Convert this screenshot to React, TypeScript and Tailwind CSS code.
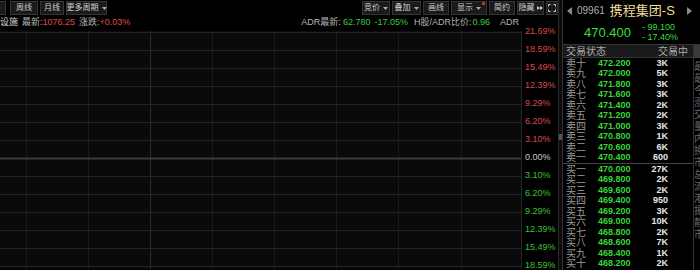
import React from 'react'

const NUM = "font-['Liberation_Sans','Noto_Sans_CJK_SC',sans-serif]"

const sells = [
  ['卖十', '472.200', '3K'],
  ['卖九', '472.000', '5K'],
  ['卖八', '471.800', '3K'],
  ['卖七', '471.600', '3K'],
  ['卖六', '471.400', '2K'],
  ['卖五', '471.200', '2K'],
  ['卖四', '471.000', '3K'],
  ['卖三', '470.800', '1K'],
  ['卖二', '470.600', '6K'],
  ['卖一', '470.400', '600'],
]

const buys = [
  ['买一', '470.000', '27K'],
  ['买二', '469.800', '2K'],
  ['买三', '469.600', '2K'],
  ['买四', '469.400', '950'],
  ['买五', '469.200', '3K'],
  ['买六', '469.000', '10K'],
  ['买七', '468.800', '2K'],
  ['买八', '468.600', '7K'],
  ['买九', '468.400', '1K'],
  ['买十', '468.200', '2K'],
]

const axis = [
  ['21.69%', 'r'], ['18.59%', 'r'], ['15.49%', 'r'], ['12.39%', 'r'], ['9.29%', 'r'], ['6.20%', 'r'], ['3.10%', 'r'],
  ['0.00%', 'z'],
  ['3.10%', 'g'], ['6.20%', 'g'], ['9.29%', 'g'], ['12.39%', 'g'], ['15.49%', 'g'], ['18.59%', 'g'],
]

function Btn({ children, w }: { children: React.ReactNode; w: string }) {
  return (
    <div className={`${w} flex h-[14px] shrink-0 items-center justify-center overflow-visible whitespace-nowrap border border-[#343434] bg-[#1a1a1a] text-[8px] leading-none text-[#cfcfcf]`}>
      {children}
    </div>
  )
}

function Caret() {
  return (
    <svg width="5" height="3" viewBox="0 0 5 3" className="ml-[3px] shrink-0">
      <path d="M0 0H5L2.5 3Z" fill="#aaa" />
    </svg>
  )
}

function Toolbar() {
  return (
    <div className="flex h-[16px] items-start pt-[1px]">
      <div className="h-[14px] w-[6px] border border-l-0 border-[#343434] bg-[#1a1a1a]" />
      <div className="ml-[4px] flex gap-[2px]">
        <Btn w="w-[28px]">周线</Btn>
        <Btn w="w-[24px]">月线</Btn>
        <Btn w="w-[41px]">更多周期<Caret /></Btn>
      </div>
      <div className="flex-1" />
      <div className="flex gap-[2px]">
        <Btn w="w-[28px]">竞价<Caret /></Btn>
        <Btn w="w-[29px]">叠加<Caret /></Btn>
        <Btn w="w-[26px]">画线</Btn>
        <Btn w="w-[36px]">
          <span className="relative flex items-center">
            显示<Caret />
            <span className="absolute right-[-4px] top-[-2px] h-[3px] w-[3px] rounded-full bg-[#ff3030]" />
          </span>
        </Btn>
        <Btn w="w-[26px]">简约</Btn>
        <Btn w="w-[27px]">
          隐藏
          <svg width="6" height="4" viewBox="0 0 6 4" className="ml-[2px]">
            <path d="M0 0L3 2L0 4ZM3 0L6 2L3 4Z" fill="#cfcfcf" />
          </svg>
        </Btn>
        <Btn w="w-[12px]">
          <svg width="8" height="8" viewBox="0 0 8 8" fill="none" stroke="#cfcfcf" strokeWidth="1">
            <path d="M0.5 2.5V0.5H2.5M5.5 0.5H7.5V2.5M7.5 5.5V7.5H5.5M2.5 7.5H0.5V5.5" />
          </svg>
        </Btn>
      </div>
    </div>
  )
}

function InfoRow() {
  return (
    <div className={`flex h-[16px] items-center whitespace-nowrap text-[9px] text-[#b5b5b5] ${NUM}`}>
      <span className="text-[#d8d8d8]">设施</span>
      <span className="ml-[4px]">最新:</span>
      <span className="text-[#e04848]">1076.25</span>
      <span className="ml-[4px]">涨跌:</span>
      <span className="text-[#e04848]">+0.03%</span>
      <div className="flex-1" />
      <span>ADR最新:</span>
      <span className="ml-[2px] text-[#3cc83c]">62.780</span>
      <span className="ml-[4px] text-[#3cc83c]">-17.05%</span>
      <span className="ml-[6px]">H股/ADR比价:</span>
      <span className="ml-[1px] text-[#3cc83c]">0.96</span>
      <span className="ml-[10px] mr-[3px]">ADR</span>
    </div>
  )
}

function ChartGrid() {
  const hs = Array.from({ length: 14 }, (_, k) => 1 + 18 * k)
  const vs = [26, 88, 150, 212, 274, 336, 398, 461]
  return (
    <svg width="522" height="238" className="block bg-[#0a0a0a]">
      {vs.map(x => (
        <line key={x} x1={x + 0.5} y1="0" x2={x + 0.5} y2="238" stroke={x === 150 ? '#2c2c2c' : '#1a1a1a'} />
      ))}
      {hs.map((y, k) => (
        <line
          key={y}
          x1="0"
          y1={y + 0.5}
          x2="522"
          y2={y + 0.5}
          stroke={k === 7 ? '#3a3a3a' : '#232323'}
          strokeWidth={k === 7 ? 2 : 1}
        />
      ))}
      <line x1="521.5" y1="0" x2="521.5" y2="238" stroke="#262626" />
    </svg>
  )
}

function Axis() {
  return (
    <div className={`w-[36px] pt-[8px] text-[9px] ${NUM}`}>
      {axis.map(([t, c], i) => (
        <div
          key={i}
          className={`flex h-[18px] items-center pl-[3px] ${c === 'r' ? 'text-[#d84a4a]' : c === 'g' ? 'text-[#3cc03c]' : 'text-[#c8c8c8]'}`}
        >
          {t}
        </div>
      ))}
    </div>
  )
}

function OrderRow({ row }: { row: string[] }) {
  return (
    <div className="flex h-[10.5px] items-center whitespace-nowrap">
      <span className="w-[35px] pl-[3px] text-[10px] text-[#9a9a9a]">{row[0]}</span>
      <span className="w-[40px] text-[9px] font-bold text-[#35d835]">{row[1]}</span>
      <span className="w-[30px] text-right text-[9px] font-bold text-[#e6e6e6]">{row[2]}</span>
    </div>
  )
}

function Quote() {
  return (
    <div className={`flex w-[138px] flex-col border-l border-[#333] ${NUM}`}>
      <div className="h-[45px] border-b border-[#333]">
        <div className="flex h-[21px] items-center whitespace-nowrap">
          <svg width="5" height="8" viewBox="0 0 5 8" className="ml-[4px]">
            <path d="M5 0V8L0 4Z" fill="#8a8a8a" />
          </svg>
          <span className="ml-[5px] text-[10px] text-[#b0b0b0]">09961</span>
          <span className="ml-[5px] text-[13px] leading-none text-[#eedf9c]">携程集团-S</span>
          <div className="flex-1" />
          <svg width="5" height="8" viewBox="0 0 5 8" className="mr-[8px]">
            <path d="M0 0V8L5 4Z" fill="#8a8a8a" />
          </svg>
        </div>
        <div className="flex h-[22px] items-center whitespace-nowrap">
          <span className="ml-[21px] text-[13px] leading-none text-[#3ade3a]">470.400</span>
          <div className="ml-[11px] flex flex-col text-[9px] leading-[10px] text-[#3ade3a]">
            <span>- 99.100</span>
            <span>- 17.40%</span>
          </div>
        </div>
      </div>
      <div className="flex flex-1">
        <div className="flex w-[131px] flex-col">
          <div className="flex h-[13px] items-center justify-between whitespace-nowrap border-b border-[#333] bg-[#1a1a1a] px-[3px] text-[10px] text-[#aaa]">
            <span>交易状态</span>
            <span className="mr-[2px]">交易中</span>
          </div>
          {sells.map(r => (
            <OrderRow key={r[0]} row={r} />
          ))}
          <div className="h-px bg-[#444]" />
          {buys.map(r => (
            <OrderRow key={r[0]} row={r} />
          ))}
        </div>
        <div className="w-[7px] overflow-hidden border-l border-[#333] text-[10px] leading-[12px] text-[#6a6a6a]">
          <div className="mb-[3px] h-[13px] bg-[#3a3a3a]" />
          {['最', '最', '今', '涨', '交', '量', '内', '换', '市', '总', '流', '港', '振', '静', '市'].map((c, i) => (
            <div key={i} className="whitespace-nowrap">{c}</div>
          ))}
        </div>
      </div>
    </div>
  )
}

export default function App() {
  return (
    <div className={`flex h-[270px] w-[700px] overflow-hidden bg-black ${NUM}`}>
      <div className="flex w-[558px] flex-col">
        <Toolbar />
        <div className="flex flex-1">
          <div className="flex w-[522px] flex-col">
            <InfoRow />
            <ChartGrid />
          </div>
          <Axis />
        </div>
      </div>
      <div className="relative w-[4px] border-l border-[#2a2a2a] bg-[#0c0c0c]">
        <div className="absolute left-0 top-[134px] h-[6px] w-[3px] bg-[#555]" />
      </div>
      <Quote />
    </div>
  )
}
